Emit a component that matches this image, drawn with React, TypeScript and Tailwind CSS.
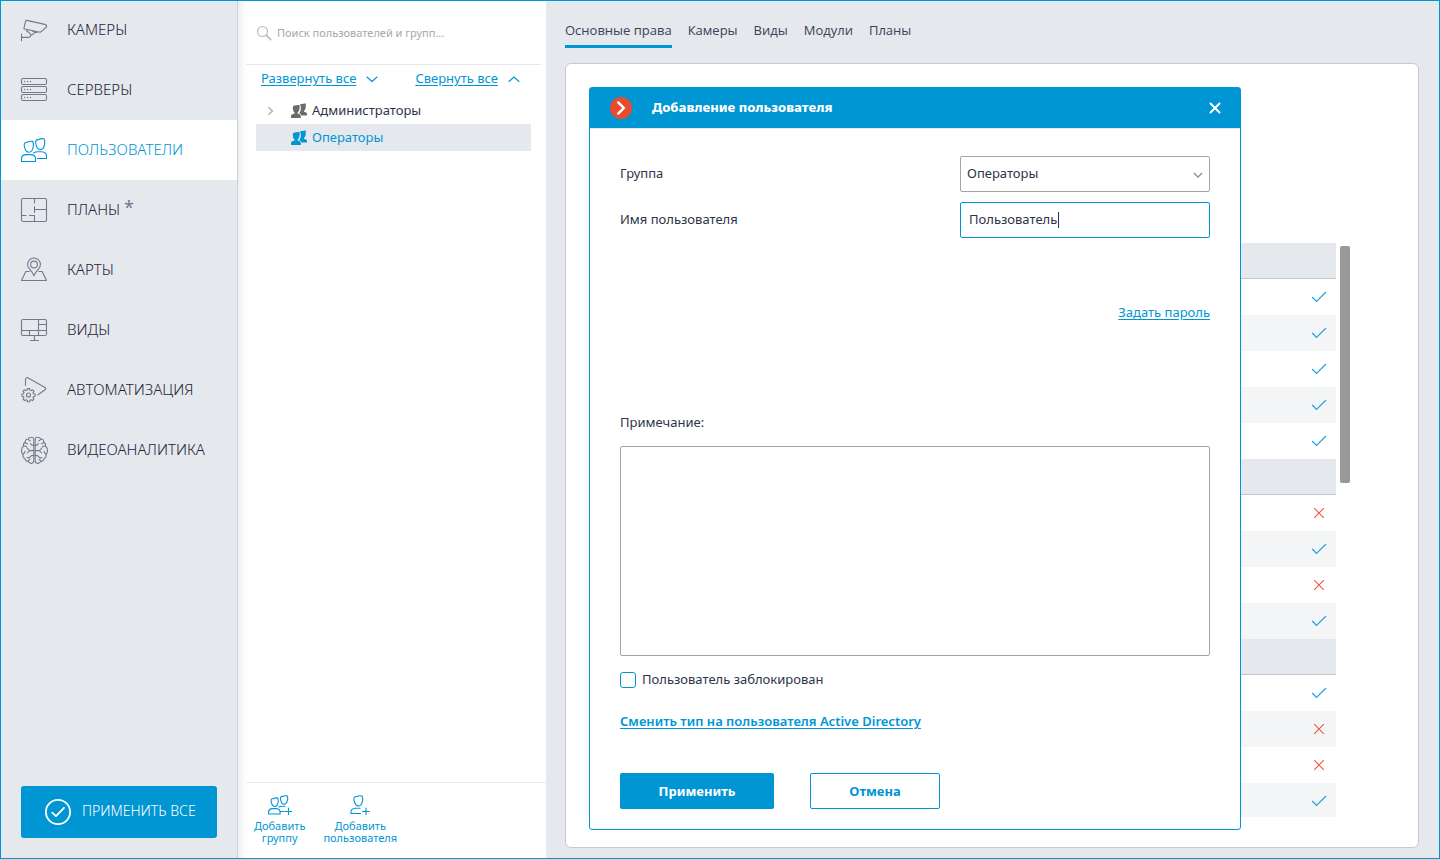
import { useState } from "react";
import type { ReactNode } from "react";

function Glyph({ children, size = "size-7", box = "0 0 28 28" }: { children: ReactNode; size?: string; box?: string }) {
  return (
    <svg
      viewBox={box}
      className={`${size} shrink-0`}
      fill="none"
      stroke="currentColor"
      strokeWidth="1.1"
      strokeLinecap="round"
      strokeLinejoin="round"
      aria-hidden="true"
    >
      {children}
    </svg>
  );
}

const CameraIcon = () => (
  <Glyph>
    <path d="M6.8 4.4 24.8 8.4Q26.8 9 26.7 10.6L22.8 14.4 20.2 16.2 4.6 13Q3.8 12.6 4 11.8L5.6 5.2Q6 4.3 6.8 4.4ZM6.3 13.6Q6.6 16 9 16.4L11 19.2 14 17.6M12.4 15 15 16.6 18.4 16M8.6 21.4Q10.6 21.2 11 19.2M1.5 21.4H8.6M1.5 18V24.8" />
  </Glyph>
);
const ServerIcon = () => (
  <Glyph>
    <rect x="1.5" y="2.5" width="25" height="6" rx="1.5" />
    <rect x="1.5" y="10.5" width="25" height="6" rx="1.5" />
    <rect x="1.5" y="18.5" width="25" height="6" rx="1.5" />
    <path d="M4.5 5.5h.1M7.5 5.5h.1M10.5 5.5h.1M4.5 13.5h.1M7.5 13.5h.1M10.5 13.5h.1M4.5 21.5h.1M7.5 21.5h.1M10.5 21.5h.1" strokeWidth="1.3" />
  </Glyph>
);
const UsersIcon = () => (
  <Glyph>
    <path d="M4.4 10.6C3.8 7.6 4.6 6 7.2 6.2C8.6 5.4 10.8 5 12.6 5.4C13.6 7 13.8 9 13.2 11C12.6 14.4 11 16.2 9 16.2C7 16.2 5 14 4.4 10.6Z" />
    <path d="M15.8 8C15.2 5 16 3.4 18.6 3.6C20 2.8 22.2 2.4 24 2.8C25 4.4 25.2 6.4 24.6 8.4C24 11.8 22.4 13.6 20.4 13.6C18.4 13.6 16.4 11.4 15.8 8Z" />
    <path d="M1.5 25.5V22.4Q1.6 18.8 6.4 18.6H10.6Q15.4 18.8 15.5 22.4V25.5ZM13.6 17Q15.4 15.8 18 15.8H21.4Q26.4 16 26.5 20V22.5H17.5" />
  </Glyph>
);
const PlanIcon = () => (
  <Glyph>
    <rect x="1.5" y="2.5" width="25" height="23" rx="1.5" />
    <path d="M14.5 2.5V7M14.5 10.5V16.5M14.5 13.5H26.5M1.5 19.5H6M9.5 19.5H14.5V25.5" />
  </Glyph>
);
const MapIcon = () => (
  <Glyph>
    <path d="M14 19.7Q12.8 16.6 9.4 12.9A6.4 6.4 0 1 1 18.6 12.9Q15.2 16.6 14 19.7Z" />
    <circle cx="14" cy="8.5" r="3.4" />
    <path d="M9.2 15.5H5.8L1.5 24.5H26.5L22.2 15.5H18.8" />
  </Glyph>
);
const ViewsIcon = () => (
  <Glyph>
    <rect x="1.5" y="3.5" width="25" height="16" rx="1.5" />
    <path d="M18.5 3.5V19.5M1.5 14.5H26.5M9.5 14.5V19.5M18.5 8.5H26.5M14.5 19.5V24.5M10.5 24.5H18.5" />
  </Glyph>
);
const AutomationIcon = () => (
  <Glyph>
    <path d="M5.5 9.2V3.2Q5.8 1.4 7.8 1.8L25 11.4Q26.4 12.6 25 13.8L17.8 19" />
    <circle cx="8.5" cy="19" r="2" />
    <path d="M7.4 12.6h2.2l.3 1.5 1.2.5 1.3-.9 1.5 1.5-.9 1.4.5 1.2 1.6.3v2.1l-1.6.3-.5 1.2.9 1.4-1.5 1.5-1.3-.9-1.2.5-.3 1.5H7.4l-.3-1.5-1.2-.5-1.3.9-1.5-1.5.9-1.4-.5-1.2-1.6-.3v-2.1l1.6-.3.5-1.2-.9-1.4 1.5-1.5 1.3.9 1.2-.5Z" />
  </Glyph>
);
const BrainHalf = () => (
  <>
    <path d="M13.8 3.4Q13.6 1 11.2 1.2Q9 1.2 8.4 3Q5.4 2.8 5.2 6.2Q2.8 7.4 3.6 10.2Q1.2 11.6 1.6 14.6Q1.4 17 3 18.4Q2.4 21.6 5 22.8Q5.6 25.4 8.4 25.4Q9.2 27.6 11.4 27.4Q13.8 27.2 13.8 24.8Z" />
    <path d="M8.4 3Q8.8 4.8 10.4 5M5.2 6.2Q6 7.8 7.6 7.8M3.6 10.2Q5.8 9.6 6.8 11.2M13.8 9.4Q11.2 9.4 10.6 7.6M13.8 14.6H9.6L7.4 12.4M9.6 14.6 7.4 17M3 18.4Q4.4 17.4 5 15.4M13.8 19.4Q11 19.2 10.2 20.8T7 21.6M8.4 25.4Q8.4 23.8 10 23.2" />
  </>
);
const BrainIcon = () => (
  <Glyph>
    <BrainHalf />
    <g transform="matrix(-1 0 0 1 29 0)">
      <BrainHalf />
    </g>
  </Glyph>
);

const GroupSolid = () => (
  <svg viewBox="0 0 16 16" className="size-4 shrink-0" fill="currentColor" aria-hidden="true">
    <path d="M8.8 1.8C9.4 .9 10.2 .8 11 1C12.2 .5 13.6 .3 14.6 .6C15 2 15 3.6 14.6 5C14.2 6.6 13.8 7.4 13 8V8.8L15 9.6Q16 10 16 11.2V12.4H10.4Q10 11.2 8.8 10.6L8 10.2C9.2 9.4 9.6 8 9.8 6C10 4 9.8 2.6 8.8 1.8Z" />
    <path d="M2 6.4C1.4 4 2.2 2.3 4.2 2.6C5.2 2 7.2 1.7 8.4 2.1C8.9 3.4 8.7 5 8.3 6.6C8 8 7.4 9 6.6 9.5V10.4L8.6 11.2Q9.8 11.6 9.8 13V15H0V13Q0 11.6 1.2 11.2L3.6 10.4V9.5C2.8 9 2.3 7.8 2 6.4Z" />
  </svg>
);

const AddGroupIcon = () => (
  <Glyph size="h-5 w-6" box="0 0 24 20">
    <path d="M3.3 7.4C2.7 5 3.4 3.3 5.6 3.6C6.8 3 8.4 2.7 9.7 3.1C10.4 4.4 10.5 6 10 7.6C9.4 10 8.3 11.5 6.9 11.5C5.3 11.5 3.9 9.9 3.3 7.4Z" />
    <path d="M12.7 5.2C12.1 2.8 12.8 1.1 15 1.4C16.2 .8 17.8 .5 19.1 .9C19.8 2.2 19.9 3.8 19.4 5.4C18.8 7.8 17.7 9.3 16.3 9.3C14.7 9.3 13.3 7.7 12.7 5.2Z" />
    <path d="M.5 19V17Q.6 14 4.4 13.6H8.4Q12 14 12.1 17V19ZM11 12Q12.4 11.2 14 11.2H17M12.6 16.5H15.6M17 16.5H24M20.5 13V20" />
  </Glyph>
);
const AddUserIcon = () => (
  <Glyph size="h-5 w-5" box="0 0 20 20">
    <path d="M4.2 6C3.4 3 4.4 1.2 7 1.5C8.4 .8 10.4 .5 12 1C12.8 2.6 12.9 4.4 12.4 6.4C11.8 9.2 10.2 11 8.4 11C6.6 11 5 9 4.2 6Z" />
    <path d="M10.5 18.5H1V16.6Q1 13.6 5 13.2H10M12.5 16.5H19.5M16 13V20" />
  </Glyph>
);

const nav: { label: string; icon: ReactNode; active?: boolean; changed?: boolean }[] = [
  { label: "КАМЕРЫ", icon: <CameraIcon /> },
  { label: "СЕРВЕРЫ", icon: <ServerIcon /> },
  { label: "ПОЛЬЗОВАТЕЛИ", icon: <UsersIcon />, active: true },
  { label: "ПЛАНЫ", icon: <PlanIcon />, changed: true },
  { label: "КАРТЫ", icon: <MapIcon /> },
  { label: "ВИДЫ", icon: <ViewsIcon /> },
  { label: "АВТОМАТИЗАЦИЯ", icon: <AutomationIcon /> },
  { label: "ВИДЕОАНАЛИТИКА", icon: <BrainIcon /> },
];

function Sidebar() {
  return (
    <aside className="flex w-[238px] shrink-0 flex-col border-r border-[#cdd0d6] bg-[#e5e8ed]">
      <nav className="flex flex-col">
        {nav.map((item) => (
          <a
            key={item.label}
            href="#"
            className={`flex h-[60px] items-center gap-[19px] pl-5 font-['Noto_Sans','Open_Sans',sans-serif] text-[15px] leading-5 font-light ${
              item.active ? "bg-white text-[#0095d3]" : "text-[#1f2638]"
            }`}
          >
            <span className={item.active ? "text-[#0095d3]" : "text-[#73798a]"}>{item.icon}</span>
            <span className="flex gap-1 pb-0.5">
              {item.label}
              {item.changed && <span className="text-lg leading-4 font-normal text-[#73798a]">*</span>}
            </span>
          </a>
        ))}
      </nav>
      <button
        type="button"
        className="mt-auto mr-5 mb-[21px] ml-[21px] flex h-[52px] items-center gap-2.5 rounded-[3px] bg-[#0095d3] pl-[23px] font-['Noto_Sans','Open_Sans',sans-serif] text-sm text-white"
      >
        <svg viewBox="0 0 28 28" className="size-7 shrink-0" fill="none" stroke="currentColor" strokeWidth="1.8" strokeLinecap="round" strokeLinejoin="round" aria-hidden="true">
          <circle cx="14" cy="14" r="12.1" />
          <path d="M8.2 14.6 12 18.2 20 9.8" />
        </svg>
        <span className="pb-0.5 font-light">ПРИМЕНИТЬ ВСЕ</span>
      </button>
    </aside>
  );
}

function UserTree() {
  return (
    <section className="flex w-[308px] shrink-0 bg-white font-['Noto_Sans','Open_Sans',sans-serif]">
      <div className="w-2 shrink-0 bg-linear-to-r from-[#eeeff2] to-white" />
      <div className="flex min-w-0 flex-1 flex-col">
        <label className="mr-[5px] flex h-[65px] items-center gap-[5px] border-b border-[#e5e8ed] pt-0.5 pl-2.5 text-[#b5b7bc]">
          <Glyph size="size-4" box="0 0 16 16">
            <circle cx="6.5" cy="6.5" r="5" />
            <path d="m10.4 10.4 4.4 4.4" strokeWidth="1.5" />
          </Glyph>
          <input
            type="text"
            aria-label="Поиск"
            placeholder="Поиск пользователей и групп..."
            className="min-w-0 flex-1 text-[11px] outline-none placeholder:text-[#a5a7ac]"
          />
        </label>
        <div className="flex h-7 items-center pr-[26px] pl-[15px] text-[13px] text-[#0095d3]">
          <a href="#" className="flex items-center gap-2.5">
            <span className="underline underline-offset-2">Развернуть все</span>
            <Glyph size="size-3" box="0 0 12 12">
              <path d="M1 4 6 8.5 11 4" />
            </Glyph>
          </a>
          <a href="#" className="ml-auto flex items-center gap-2.5">
            <span className="underline underline-offset-2">Свернуть все</span>
            <Glyph size="size-3" box="0 0 12 12">
              <path d="M1 8.5 6 4 11 8.5" />
            </Glyph>
          </a>
        </div>
        <ul className="mt-1 mr-[15px] ml-2.5 text-[13px]">
          <li className="flex h-[27px] items-center pl-2 text-[#2d3447]">
            <span className="w-[27px] text-[#a5a7ac]">
              <Glyph size="size-3" box="0 0 12 12">
                <path d="m4.5 2.5 4 3.5-4 3.5" />
              </Glyph>
            </span>
            <span className="text-[#6b6b6b]">
              <GroupSolid />
            </span>
            <span className="ml-[5px]">Администраторы</span>
          </li>
          <li className="flex h-[27px] items-center bg-[#e5e8ed] pl-[35px] text-[#0095d3]">
            <GroupSolid />
            <span className="ml-[5px]">Операторы</span>
          </li>
        </ul>
        <div className="mt-auto flex h-[77px] gap-[18px] border-t border-[#e8eaed] pt-3 pl-2 text-[11px] leading-3 text-[#0095d3]">
          <button type="button" className="flex flex-col items-center gap-[5px]">
            <AddGroupIcon />
            <span>
              Добавить
              <br />
              группу
            </span>
          </button>
          <button type="button" className="flex flex-col items-center gap-[5px]">
            <AddUserIcon />
            <span>
              Добавить
              <br />
              пользователя
            </span>
          </button>
        </div>
      </div>
    </section>
  );
}

const groups: boolean[][] = [
  [true, true, true, true, true],
  [false, true, false, true],
  [true, false, false, true],
];

function Mark({ on }: { on: boolean }) {
  return on ? (
    <svg viewBox="0 0 16 12" className="ml-auto h-3 w-4" fill="none" stroke="#1c9fdb" strokeWidth="1.1" role="img" aria-label="Да">
      <path d="M1.2 6 5.5 10.5 15 1" />
    </svg>
  ) : (
    <svg viewBox="0 0 16 12" className="ml-auto h-3 w-4" fill="none" stroke="#f0563c" strokeWidth="1.1" role="img" aria-label="Нет">
      <path d="m3.2 1.2 9.6 9.6M12.8 1.2 3.2 10.8" />
    </svg>
  );
}

function RightsTable() {
  return (
    <div className="flex min-h-0 flex-1 gap-1 overflow-hidden">
      <table className="w-full flex-1 border-separate border-spacing-0 self-start">
        {groups.map((rows, g) => (
          <tbody key={g}>
            <tr className="h-9 bg-[#e5e8ed]">
              <td className="border-b border-[#c3c6ce]" />
            </tr>
            {rows.map((on, i) => (
              <tr key={i} className="h-9 even:bg-white odd:bg-[#f4f5f7]">
                <td className="pr-[9px]">
                  <Mark on={on} />
                </td>
              </tr>
            ))}
          </tbody>
        ))}
      </table>
      <div className="mt-[3px] h-[237px] w-2.5 shrink-0 rounded-[2px] bg-[#999999]" />
    </div>
  );
}

const initialName = "Пользователь";

function AddUserDialog() {
  const [name, setName] = useState(initialName);
  return (
    <div
      role="dialog"
      aria-labelledby="dialog-title"
      className="absolute top-[23px] left-[23px] w-[652px] rounded-[3px] border border-[#0095d3] bg-white font-['Noto_Sans','Open_Sans',sans-serif] text-[13px] leading-5 text-[#2d3447]"
    >
      <header className="flex h-10 items-center bg-[#0095d3] pr-[19px] pl-5 text-white">
        <svg viewBox="0 0 22 22" className="size-[22px]" aria-hidden="true">
          <circle cx="11" cy="11" r="11" fill="#e94b30" />
          <path d="m8.2 5.4 5.6 5.6-5.6 5.6" fill="none" stroke="white" strokeWidth="2.4" strokeLinecap="round" />
        </svg>
        <h2 id="dialog-title" className="ml-5 pb-0.5 font-extrabold">
          Добавление пользователя
        </h2>
        <button type="button" aria-label="Закрыть" className="ml-auto">
          <svg viewBox="0 0 12 12" className="size-3" fill="none" stroke="currentColor" strokeWidth="2" strokeLinecap="round" aria-hidden="true">
            <path d="m1.5 1.5 9 9M10.5 1.5l-9 9" />
          </svg>
        </button>
      </header>
      <form className="flex flex-col border-t border-[#e5e8ed] px-[30px] pt-[27px] pb-5" onSubmit={(e) => e.preventDefault()}>
        <div className="flex items-center justify-between">
          <label htmlFor="group" className="pb-0.5">
            Группа
          </label>
          <div className="relative">
            <select id="group" className="block h-9 w-[250px] appearance-none rounded-[2px] border border-[#a5a5a5] bg-white pb-0.5 pl-1.5 outline-none">
              <option>Операторы</option>
              <option>Администраторы</option>
            </select>
            <svg viewBox="0 0 10 10" className="pointer-events-none absolute top-[14px] right-[7px] size-2.5 text-[#858585]" fill="none" stroke="currentColor" strokeWidth="1.2" aria-hidden="true">
              <path d="M1 3 5 7.2 9 3" />
            </svg>
          </div>
        </div>
        <div className="mt-2.5 flex items-center justify-between">
          <label htmlFor="name" className="pb-0.5">
            Имя пользователя
          </label>
          <div className="relative">
            <input
              id="name"
              type="text"
              value={name}
              onChange={(e) => setName(e.target.value)}
              className="block h-9 w-[250px] rounded-[2px] border border-[#0095d3] bg-white px-2 pb-0.5 outline-none"
            />
            {name === initialName && <span className="pointer-events-none absolute top-2.5 left-[98px] h-4 w-px bg-[#2d3447]" />}
          </div>
        </div>
        <a href="#" className="mt-16 self-end text-[#0095d3] underline underline-offset-2">
          Задать пароль
        </a>
        <label htmlFor="note" className="mt-[90px]">
          Примечание:
        </label>
        <textarea id="note" className="mt-3.5 h-[210px] resize-none rounded-[2px] border border-[#a5a5a5] p-2 outline-none" />
        <label className="mt-[13px] flex items-center gap-1.5">
          <input type="checkbox" className="size-4 appearance-none rounded-[3px] border border-[#0095d3] bg-white" />
          <span className="pb-0.5">Пользователь заблокирован</span>
        </label>
        <a href="#" className="mt-5 self-start font-semibold text-[#0095d3] underline underline-offset-2">
          Сменить тип на пользователя Active Directory
        </a>
        <div className="mt-[42px] flex gap-9 font-bold">
          <button type="submit" className="h-9 w-[154px] rounded-[2px] bg-[#0095d3] text-white">
            Применить
          </button>
          <button type="button" className="h-9 w-[130px] rounded-[2px] border border-[#0095d3] bg-white text-[#0095d3]">
            Отмена
          </button>
        </div>
      </form>
    </div>
  );
}

const tabs = ["Основные права", "Камеры", "Виды", "Модули", "Планы"];

export default function App() {
  return (
    <div className="flex h-screen bg-[#e5e8ed] font-['Open_Sans','Noto_Sans',sans-serif] outline-1 -outline-offset-1 outline-[#0095d3]">
      <Sidebar />
      <UserTree />
      <main className="flex min-w-0 flex-1 flex-col pr-[21px] pb-[11px] pl-[19px]">
        <nav className="flex gap-4 pt-5 text-[13px] leading-5 text-[#3b4256]">
          {tabs.map((tab, i) => (
            <a key={tab} href="#" className={`border-b-[3px] pb-[5px] ${i === 0 ? "border-[#0095d3]" : "border-transparent"}`}>
              {tab}
            </a>
          ))}
        </nav>
        <div className="relative mt-[15px] flex min-h-0 flex-1 flex-col rounded-md border border-[#c8c9cf] bg-white pt-[179px] pr-[68px] pb-[30px] pl-[60px]">
          <RightsTable />
          <AddUserDialog />
        </div>
      </main>
    </div>
  );
}
